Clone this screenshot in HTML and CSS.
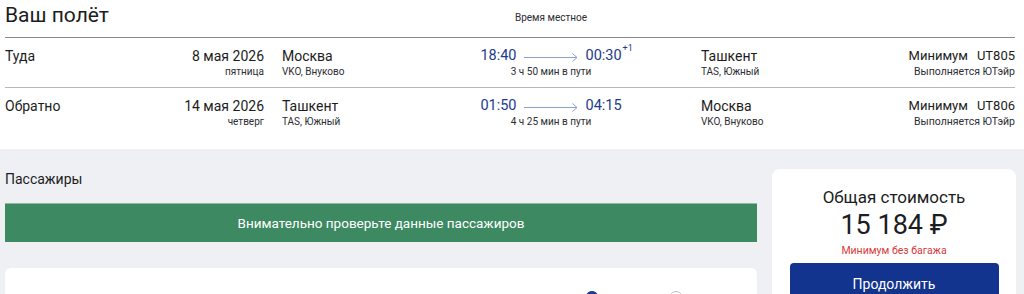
FILE: index.html
```html
<!DOCTYPE html>
<html lang="ru">
<head>
    <meta charset="UTF-8">
    <meta name="viewport" content="width=device-width, initial-scale=1.0">
    <title>Ваш полёт</title>
    <link rel="stylesheet" href="styles.css">
</head>
<body>

<div class="flight">
    <div class="flight-head">
        <h1>Ваш полёт</h1>
        <div class="local-time">Время местное</div>
    </div>

    <div class="leg">
        <div class="leg-date">
            <span class="leg-dir">Туда</span>
            <div class="date">
                <div class="main">8 мая 2026</div>
                <div class="sub">пятница</div>
            </div>
        </div>
        <div class="city">
            <div class="main">Москва</div>
            <div class="sub">VKO, Внуково</div>
        </div>
        <div class="times">
            <div class="time-row">
                <span>18:40</span>
                <svg class="arrow" width="55" height="10" viewBox="0 0 55 10"><path d="M0 5.5H53M48.5 1.5L53 5.5L48.5 9.5" fill="none" stroke="#8ea2d2" stroke-width="1"/></svg>
                <span class="arrive">00:30<sup>+1</sup></span>
            </div>
            <div class="sub">3 ч 50 мин в пути</div>
        </div>
        <div class="city to">
            <div class="main">Ташкент</div>
            <div class="sub">TAS, Южный</div>
        </div>
        <div class="fare">
            <div class="main"><span>Минимум</span><span>UT805</span></div>
            <div class="sub">Выполняется ЮТэйр</div>
        </div>
    </div>

    <div class="leg">
        <div class="leg-date">
            <span class="leg-dir">Обратно</span>
            <div class="date">
                <div class="main">14 мая 2026</div>
                <div class="sub">четверг</div>
            </div>
        </div>
        <div class="city">
            <div class="main">Ташкент</div>
            <div class="sub">TAS, Южный</div>
        </div>
        <div class="times">
            <div class="time-row">
                <span>01:50</span>
                <svg class="arrow" width="55" height="10" viewBox="0 0 55 10"><path d="M0 5.5H53M48.5 1.5L53 5.5L48.5 9.5" fill="none" stroke="#8ea2d2" stroke-width="1"/></svg>
                <span class="arrive">04:15</span>
            </div>
            <div class="sub">4 ч 25 мин в пути</div>
        </div>
        <div class="city to">
            <div class="main">Москва</div>
            <div class="sub">VKO, Внуково</div>
        </div>
        <div class="fare">
            <div class="main"><span>Минимум</span><span>UT806</span></div>
            <div class="sub">Выполняется ЮТэйр</div>
        </div>
    </div>
</div>

<div class="checkout">
    <div class="passengers">
        <h2>Пассажиры</h2>
        <div class="notice">Внимательно проверьте данные пассажиров</div>
        <div class="passenger-card">
            <span class="radio checked"></span>
            <span class="radio"></span>
        </div>
    </div>

    <div class="total">
        <div class="total-label">Общая стоимость</div>
        <div class="total-price">15 184 ₽</div>
        <div class="total-note">Минимум без багажа</div>
        <button class="continue">Продолжить</button>
    </div>
</div>

</body>
</html>
```

FILE: styles.css
```css
body {
    margin: 0;
    font-family: Roboto, "Noto Sans", sans-serif;
    color: #1b1d22;
    background-color: #eff0f4;
    overflow: hidden;
    height: 294px;
}
.flight {
    background-color: #ffffff;
    padding: 0 9px 12px 5px;
}
.flight-head,
.leg {
    display: grid;
    grid-template-columns: 259px 198px 178px 1fr auto;
}
.flight-head {
    height: 37px;
    border-bottom: 1px solid #8a8a8a;
}
h1 {
    margin: 0;
    padding-top: 3px;
    font-size: 21px;
    line-height: 24px;
    font-weight: 400;
    white-space: nowrap;
}
.local-time {
    grid-column: 3;
    text-align: center;
    font-size: 10px;
    padding-top: 12px;
    color: #2b2d33;
}
.leg {
    padding: 9px 0 8px;
    border-bottom: 1px solid #b8b8b8;
}
.leg:last-child {
    border-bottom: none;
}
.main {
    font-size: 14px;
    line-height: 18px;
}
.sub {
    font-size: 10px;
    line-height: 14px;
    color: #2b2d33;
}
.leg-date {
    display: flex;
    justify-content: space-between;
}
.leg-dir {
    font-size: 14px;
    line-height: 18px;
}
.date {
    text-align: right;
}
.city {
    padding-left: 18px;
}
.city.to {
    padding-left: 61px;
}
.times {
    text-align: center;
}
.time-row {
    display: flex;
    justify-content: center;
    align-items: center;
    gap: 7px;
    font-size: 14.5px;
    line-height: 18px;
    color: #1c3a8e;
}
.arrive {
    position: relative;
}
.arrive sup {
    position: absolute;
    left: 100%;
    top: -5px;
    font-size: 9px;
    line-height: 12px;
    margin-left: 1px;
}
.arrow {
    display: block;
    margin-top: 1px;
}
.fare {
    text-align: right;
}
.fare .main {
    font-size: 13px;
}
.fare .main span + span {
    margin-left: 9px;
}
.fare .sub {
    font-size: 10.5px;
}
.checkout {
    display: flex;
    gap: 15px;
    padding: 21px 8px 0 5px;
}
.passengers {
    flex: 1;
}
h2 {
    margin: 0;
    font-size: 14px;
    font-weight: 400;
    line-height: 18px;
}
.notice {
    margin-top: 15px;
    height: 38px;
    line-height: 38px;
    background-color: #3d8a62;
    border-top: 1px solid #8fbba4;
    color: #ffffff;
    text-align: center;
    font-size: 13.5px;
}
.passenger-card {
    margin-top: 26px;
    height: 40px;
    background-color: #ffffff;
    border-radius: 6px;
    position: relative;
}
.radio {
    position: absolute;
    top: 23px;
    width: 14px;
    height: 14px;
    box-sizing: border-box;
    border-radius: 50%;
    border: 1px solid #b9bcc6;
}
.radio.checked {
    left: 580px;
    border-color: #1c3a8e;
    background-color: #1c3a8e;
}
.radio:not(.checked) {
    left: 664px;
}
.total {
    width: 244px;
    margin-top: -1px;
    background-color: #ffffff;
    border-radius: 8px;
    text-align: center;
    padding-top: 17px;
    height: 120px;
}
.total-label {
    font-size: 17px;
    line-height: 22px;
}
.total-price {
    font-size: 27px;
    line-height: 34px;
    font-weight: 400;
}
.total-note {
    font-size: 10.5px;
    line-height: 14px;
    color: #d93a3a;
    margin-top: 2px;
}
.continue {
    display: block;
    width: 209px;
    height: 40px;
    margin: 5px auto 0;
    background-color: #13348e;
    color: #ffffff;
    border: none;
    border-radius: 4px;
    font-family: inherit;
    font-size: 14px;
    padding-bottom: 0;
}
```
